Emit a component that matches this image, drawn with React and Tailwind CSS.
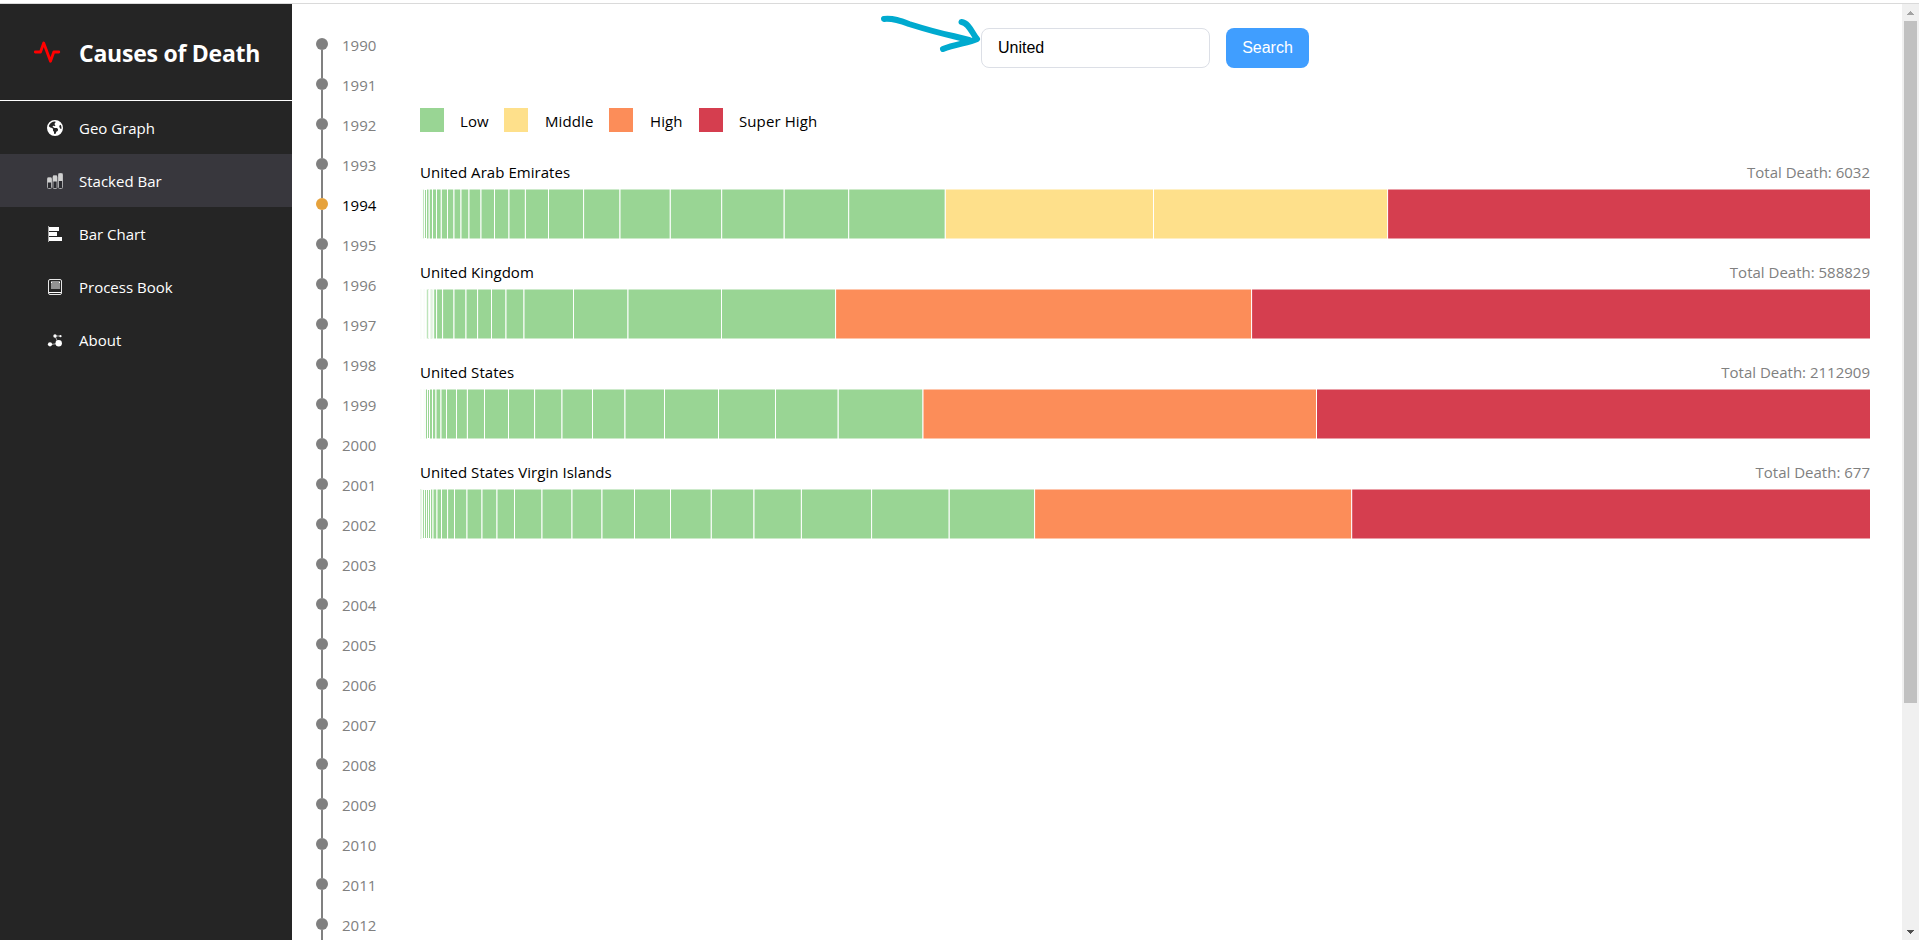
import { FaEarthAmericas } from "react-icons/fa6";

const COLORS = { L: "#99d594", M: "#fee08b", H: "#fc8d59", S: "#d53e4f" };

const LEGEND = [
  { label: "Low", color: "bg-[#99d594]", width: "w-[84px]", gap: "gap-4" },
  { label: "Middle", color: "bg-[#fee08b]", width: "w-[105px]", gap: "gap-[17px]" },
  { label: "High", color: "bg-[#fc8d59]", width: "w-[90px]", gap: "gap-[17px]" },
  { label: "Super High", color: "bg-[#d53e4f]", width: "w-[130px]", gap: "gap-4" },
];

// Each bar lists the right-hand edge of its segments, from the smallest cause up.
const BARS = [
  {
    name: "United Arab Emirates",
    total: 6032,
    low: [0.2, 0.6, 1, 1.6, 2.2, 2.9, 4.5, 6.5, 9.2, 12.5, 16.5, 21.3, 27.5, 34, 41, 49, 61, 74.5, 89, 105.4, 128.5, 163.6, 200, 250.3, 301.7, 364.2, 428.7, 525.3],
    rest: [["M", 733.5], ["M", 967.6], ["S", 1452]],
  },
  {
    name: "United Kingdom",
    total: 588829,
    low: [0.4, 0.8, 1.3, 1.9, 2.5, 3.2, 3.9, 4.7, 5.5, 6.3, 8.3, 9.5, 10.9, 12.2, 13.7, 16.6, 22.6, 34, 46, 57.6, 71.5, 86, 104, 153.5, 208, 301.5, 415.6],
    rest: [["H", 831.6], ["S", 1452]],
  },
  {
    name: "United States",
    total: 2112909,
    low: [0.4, 0.8, 1.3, 1.9, 2.5, 3.2, 3.9, 4.7, 5.4, 7.5, 9.5, 12.5, 16, 21, 26.5, 36.5, 47.4, 64.5, 88.5, 114.6, 142, 172.5, 205, 244.5, 298.5, 355.5, 418.2, 503],
    rest: [["H", 896.5], ["S", 1452]],
  },
  {
    name: "United States Virgin Islands",
    total: 677,
    low: [1.2, 2.6, 4.5, 6.5, 8.5, 10.5, 13, 17, 21.5, 27.6, 34.5, 47, 62, 77, 94.5, 122, 152, 182, 214.5, 250.5, 291.3, 334, 381.4, 451.6, 529.2, 614.6],
    rest: [["H", 931.7], ["S", 1452]],
  },
];

const YEARS = Array.from({ length: 23 }, (_, i) => 1990 + i);

const TEXT = "font-['Open_Sans','Noto_Sans',sans-serif]";

function PulseIcon() {
  return (
    <svg className="block h-[24px] w-[30px]" viewBox="0 0 30 24" fill="none" stroke="#ff0000" strokeWidth="2.8" strokeLinecap="round" strokeLinejoin="round">
      <path d="M3.300 12h5.200L11.700 3 18.500 21.300 21.800 12h5" />
    </svg>
  );
}

function StackedIcon() {
  return (
    <svg className="size-4" viewBox="0 0 16 16">
      <g fill="#2b2b30" stroke="#aaaaac" strokeWidth="1">
        <rect x="0.500" y="5" width="4" height="10.500" rx="1" />
        <rect x="6" y="3" width="4" height="12.500" rx="1" />
        <rect x="11.500" y="0.500" width="4" height="15" rx="1" />
      </g>
      <g fill="#d0d0d0">
        <rect x="0.500" y="4.500" width="4" height="5" />
        <rect x="6" y="2.500" width="4" height="6" />
        <rect x="11.500" y="0.500" width="4" height="7.500" />
      </g>
    </svg>
  );
}

function BarsIcon() {
  return (
    <svg className="size-4" viewBox="0 0 16 16" fill="#fff">
      <rect x="1" y="0" width="1" height="16" fill="#a8a8a8" />
      <rect x="2" y="1" width="10" height="4" />
      <rect x="2" y="6" width="8" height="4" />
      <rect x="2" y="11" width="13" height="4" />
    </svg>
  );
}

function BookIcon() {
  return (
    <svg className="size-4" viewBox="0 0 16 16" fill="none">
      <rect x="1.500" y="0.500" width="13" height="15" rx="1.500" stroke="#e6e6e6" />
      <rect x="4" y="2" width="9" height="8" fill="#929292" />
      <path d="M4 3.500h1M12 3.500h1" stroke="#fff" />
      <path d="M2 13.500h12" stroke="#fff" />
    </svg>
  );
}

function NodesIcon() {
  return (
    <svg className="size-4" viewBox="0 0 16 16" fill="#fff">
      <path d="M3 12.500 11.500 11.500 8 4 13.500 4" fill="none" stroke="#aaa" strokeWidth="1" />
      <circle cx="3" cy="12.300" r="2.100" />
      <circle cx="11.700" cy="11.300" r="3.200" />
      <circle cx="8" cy="4" r="1.700" />
      <circle cx="13.500" cy="4.200" r="1.100" />
    </svg>
  );
}

const MENU = [
  { label: "Geo Graph", icon: <FaEarthAmericas className="size-4" /> },
  { label: "Stacked Bar", icon: <StackedIcon />, active: true },
  { label: "Bar Chart", icon: <BarsIcon /> },
  { label: "Process Book", icon: <BookIcon /> },
  { label: "About", icon: <NodesIcon /> },
];

function Sidebar() {
  return (
    <aside className="w-[292px] shrink-0 bg-[#252525] text-white">
      <div className="flex h-[97px] items-center border-b border-white pl-8">
        <div className="w-[47px]">
          <PulseIcon />
        </div>
        <h1 className="whitespace-nowrap pt-0.5 text-[23px] font-bold leading-8 tracking-[-0.24px]">Causes of Death</h1>
      </div>
      <nav>
        {MENU.map((m) => (
          <a key={m.label} className={`flex h-[53px] items-center gap-4 pl-[47px] ${m.active ? "bg-[#38373d]" : ""}`}>
            {m.icon}
            <span className="text-[15px] leading-5">{m.label}</span>
          </a>
        ))}
      </nav>
    </aside>
  );
}

function Timeline() {
  return (
    <ol className="w-[128px] shrink-0 pl-6 pt-5">
      {YEARS.map((y) => (
        <li key={y} className="flex h-10 items-center gap-3.5">
          <div className="flex h-10 w-3 flex-col items-center">
            <div className={`w-0.5 flex-1 ${y === 1990 ? "" : "bg-[#808080]"}`} />
            <div className={`size-3 rounded-full ${y === 1994 ? "bg-[#e6a23c]" : "bg-[#808080]"}`} />
            <div className="w-0.5 flex-1 bg-[#808080]" />
          </div>
          <span className={`pt-px text-[15px] leading-5 ${y === 1994 ? "text-black" : "text-[#808080]"}`}>{y}</span>
        </li>
      ))}
    </ol>
  );
}

function StackedBar({ bar }) {
  const segments = [...bar.low.map((x) => ["L", x]), ...bar.rest];
  return (
    <section className="h-[100px] w-[1450px]">
      <div className="flex h-[27px] items-start justify-between pt-px text-[15px] leading-5">
        <span className="tracking-[0.05px] text-black">{bar.name}</span>
        <span className="text-[#808080]">Total Death: {bar.total}</span>
      </div>
      <svg className="block h-[52px] w-full" viewBox="0 0 1450 52">
        {segments.map(([level, end], i) => {
          const start = i ? segments[i - 1][1] : 0;
          return <rect key={i} x={start} y="1" width={end - start} height="50" fill={COLORS[level]} stroke="#fff" strokeWidth="1" />;
        })}
      </svg>
    </section>
  );
}

function Scrollbar() {
  return (
    <div className="flex w-[17px] shrink-0 flex-col items-center bg-[#f0f0f0]">
      <div className="flex h-[17px] items-center">
        <svg className="h-1 w-[7px]" viewBox="0 0 7 4" fill="#a3a3a3" shapeRendering="crispEdges">
          <path d="M3 0h1v1h1v1h1v1h1v1H0V3h1V2h1V1h1z" />
        </svg>
      </div>
      <div className="h-[682px] w-[13px] bg-[#c1c1c1]" />
      <div className="flex-1" />
      <div className="flex h-[17px] items-center">
        <svg className="h-1 w-[7px]" viewBox="0 0 7 4" fill="#505050" shapeRendering="crispEdges">
          <path d="M0 0h7v1H6v1H5v1H4v1H3V3H2V2H1V1H0z" />
        </svg>
      </div>
    </div>
  );
}

export default function App() {
  return (
    <div className={`flex h-[940px] w-[1919px] flex-col overflow-hidden bg-white pt-[3px] ${TEXT}`}>
      <div className="h-px shrink-0 bg-[#dadada]" />
      <div className="flex min-h-0 flex-1">
        <Sidebar />
        <Timeline />
        <main className="relative min-w-0 flex-1 pt-6">
          <div className="flex h-10 gap-4 pl-[561px] font-['Liberation_Sans',Arial,sans-serif] text-base">
            <input className="h-10 w-[229px] rounded-lg border border-[#dcdfe6] bg-white px-4 text-black outline-none" defaultValue="United" />
            <button className="h-10 w-[83px] rounded-lg bg-[#409eff] text-white">Search</button>
          </div>
          <svg className="pointer-events-none absolute left-[455px] top-[5px] h-12 w-[110px]" viewBox="0 0 110 48" fill="none" stroke="#00aacf" strokeWidth="6" strokeLinecap="round" strokeLinejoin="round">
            <path d="M9 10C18 9 26 12 34 15C50 20 64 24 78 27L94 31" />
            <path d="M86.500 13C94 14 97 24 102 30C94 34 80 35 68 40" />
          </svg>
          <div className="mt-[38px] flex h-[29px]">
            {LEGEND.map((l) => (
              <div key={l.label} className={`flex ${l.gap} ${l.width}`}>
                <div className={`mt-0.5 size-6 shrink-0 ${l.color}`} />
                <span className="whitespace-nowrap pt-[5px] text-[15px] leading-5 tracking-[0.1px] text-black">{l.label}</span>
              </div>
            ))}
          </div>
          <div className="pt-[26px]">
            {BARS.map((b) => (
              <StackedBar key={b.name} bar={b} />
            ))}
          </div>
        </main>
        <Scrollbar />
      </div>
    </div>
  );
}
